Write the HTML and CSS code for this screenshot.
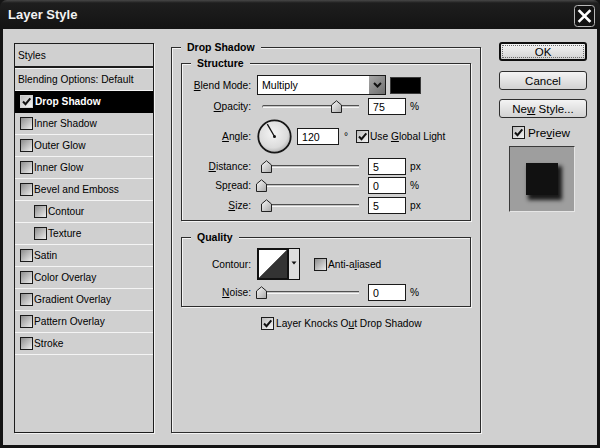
FILE: index.html
```html
<!DOCTYPE html>
<html>
<head>
<meta charset="utf-8">
<link rel="stylesheet" href="styles.css">
</head>
<body>
<div class="win">
  <div class="titlebar">
    <span class="title">Layer Style</span>
    <span class="close">
      <svg width="21" height="22" viewBox="0 0 21 22"><rect x="0.5" y="0.5" width="20" height="21" rx="3" fill="#121212" stroke="#b8b8b8"/><path d="M5.5 6 L15.5 16 M15.5 6 L5.5 16" stroke="#fff" stroke-width="2.6" stroke-linecap="square"/></svg>
    </span>
  </div>
  <div class="content">
    <div class="styles-panel">
      <div class="srow head">Styles</div>
      <div class="head-sep"></div>
      <div class="srow plain">Blending Options: Default</div>
      <div class="srow sel"><span class="cb on"><svg width="11" height="11" viewBox="0 0 11 11"><path d="M2 5.5 L4.5 8.2 L9.3 2.3" fill="none" stroke="#111" stroke-width="2"/></svg></span>Drop Shadow</div>
      <div class="srow"><span class="cb"></span>Inner Shadow</div>
      <div class="srow"><span class="cb"></span>Outer Glow</div>
      <div class="srow"><span class="cb"></span>Inner Glow</div>
      <div class="srow"><span class="cb"></span>Bevel and Emboss</div>
      <div class="srow indent"><span class="cb"></span>Contour</div>
      <div class="srow indent"><span class="cb"></span>Texture</div>
      <div class="srow"><span class="cb"></span>Satin</div>
      <div class="srow"><span class="cb"></span>Color Overlay</div>
      <div class="srow"><span class="cb"></span>Gradient Overlay</div>
      <div class="srow"><span class="cb"></span>Pattern Overlay</div>
      <div class="srow"><span class="cb"></span>Stroke</div>
    </div>

    <fieldset class="grp outer">
      <legend>Drop Shadow</legend>
      <fieldset class="grp inner structure">
        <legend>Structure</legend>
        <div class="row r-blend">
          <span class="lbl"><u>B</u>lend Mode:</span>
          <div class="select"><span class="sel-text">Multiply</span><span class="sel-btn"><svg width="9" height="6" viewBox="0 0 9 6"><path d="M1 1 L4.5 4.5 L8 1" fill="none" stroke="#111" stroke-width="2"/></svg></span></div>
          <span class="swatch"></span>
        </div>
        <div class="row r-op">
          <span class="lbl"><u>O</u>pacity:</span>
          <div class="slider"><span class="track"></span><span class="thumb" style="left:74px"><svg width="11" height="13" viewBox="0 0 11 13"><defs><linearGradient id="tg" x1="0" y1="0" x2="1" y2="1"><stop offset="0" stop-color="#fafafa"/><stop offset="1" stop-color="#a8a8a8"/></linearGradient></defs><path d="M0.5 5 L5.5 0.8 L10.5 5 L10.5 12.5 L0.5 12.5 Z" fill="url(#tg)" stroke="#222"/></svg></span></div>
          <span class="field">75</span><span class="unit">%</span>
        </div>
        <div class="row r-angle">
          <span class="lbl"><u>A</u>ngle:</span>
          <svg class="dial" width="35" height="35" viewBox="0 0 35 35"><defs><radialGradient id="dg" cx="0.45" cy="0.4" r="0.6"><stop offset="0" stop-color="#f4f4f4"/><stop offset="0.75" stop-color="#dcdcdc"/><stop offset="1" stop-color="#b4b4b4"/></radialGradient></defs><circle cx="17.5" cy="17.5" r="16.2" fill="url(#dg)" stroke="#161616" stroke-width="1.8"/><path d="M17.5 17.5 L10.3 5.2" stroke="#111" stroke-width="1.3"/><circle cx="17.5" cy="17.5" r="1.5" fill="#111"/></svg>
          <span class="field f-angle">120</span><span class="deg">°</span>
          <span class="cb on gl"><svg width="11" height="11" viewBox="0 0 11 11"><path d="M2 5.5 L4.5 8.2 L9.3 2.3" fill="none" stroke="#111" stroke-width="2"/></svg></span><span>Use <u>G</u>lobal Light</span>
        </div>
        <div class="row r-dist">
          <span class="lbl"><u>D</u>istance:</span>
          <div class="slider"><span class="track"></span><span class="thumb" style="left:4px"><svg width="11" height="13" viewBox="0 0 11 13"><path d="M0.5 5 L5.5 0.8 L10.5 5 L10.5 12.5 L0.5 12.5 Z" fill="url(#tg)" stroke="#222"/></svg></span></div>
          <span class="field">5</span><span class="unit">px</span>
        </div>
        <div class="row r-spread">
          <span class="lbl">Sp<u>r</u>ead:</span>
          <div class="slider"><span class="track"></span><span class="thumb" style="left:-1px"><svg width="11" height="13" viewBox="0 0 11 13"><path d="M0.5 5 L5.5 0.8 L10.5 5 L10.5 12.5 L0.5 12.5 Z" fill="url(#tg)" stroke="#222"/></svg></span></div>
          <span class="field">0</span><span class="unit">%</span>
        </div>
        <div class="row r-size">
          <span class="lbl"><u>S</u>ize:</span>
          <div class="slider"><span class="track"></span><span class="thumb" style="left:4px"><svg width="11" height="13" viewBox="0 0 11 13"><path d="M0.5 5 L5.5 0.8 L10.5 5 L10.5 12.5 L0.5 12.5 Z" fill="url(#tg)" stroke="#222"/></svg></span></div>
          <span class="field">5</span><span class="unit">px</span>
        </div>
      </fieldset>

      <fieldset class="grp inner quality">
        <legend>Quality</legend>
        <div class="row r-contour">
          <span class="lbl">Contour:</span>
          <svg class="contour" width="43" height="32" viewBox="0 0 43 32"><rect x="0" y="0" width="43" height="32" fill="#111"/><path d="M2 2 L30 2 L2 30 Z" fill="#fff"/><path d="M30 2 L30 30 L2 30 Z" fill="#333"/><rect x="32" y="1" width="10" height="30" fill="#dedede"/><path d="M34.5 13.5 L39.5 13.5 L37 16.5 Z" fill="#111"/></svg>
          <span class="cb aa"></span><span>Anti-a<u>l</u>iased</span>
        </div>
        <div class="row r-noise">
          <span class="lbl"><u>N</u>oise:</span>
          <div class="slider"><span class="track"></span><span class="thumb" style="left:-1px"><svg width="11" height="13" viewBox="0 0 11 13"><path d="M0.5 5 L5.5 0.8 L10.5 5 L10.5 12.5 L0.5 12.5 Z" fill="url(#tg)" stroke="#222"/></svg></span></div>
          <span class="field">0</span><span class="unit">%</span>
        </div>
      </fieldset>

      <div class="row knock">
        <span class="cb on"><svg width="11" height="11" viewBox="0 0 11 11"><path d="M2 5.5 L4.5 8.2 L9.3 2.3" fill="none" stroke="#111" stroke-width="2"/></svg></span><span>Layer Knocks O<u>u</u>t Drop Shadow</span>
      </div>
    </fieldset>

    <div class="side">
      <div class="btn default"><span class="focus">OK</span></div>
      <div class="btn cancel"><span>Cancel</span></div>
      <div class="btn newstyle"><span>Ne<u>w</u> Style...</span></div>
      <div class="prev-row"><span class="cb on"><svg width="11" height="11" viewBox="0 0 11 11"><path d="M2 5.5 L4.5 8.2 L9.3 2.3" fill="none" stroke="#111" stroke-width="2"/></svg></span><span>Pre<u>v</u>iew</span></div>
      <div class="preview"><div class="square"></div></div>
    </div>
  </div>
</div>
</body>
</html>
```
FILE: styles.css
```css
* { box-sizing: border-box; }
html, body { margin: 0; padding: 0; }
body {
  width: 600px;
  height: 448px;
  overflow: hidden;
  background: #141414;
  font-family: "Liberation Sans", Arial, sans-serif;
  font-size: 10.2px;
  color: #000;
}
u { text-decoration: underline; text-underline-offset: 1px; }

.win {
  width: 600px;
  height: 448px;
  padding: 0 3px 3px 3px;
  border-radius: 7px 7px 0 0;
  background: linear-gradient(#474747 0, #1e1e1e 3px, #131313 29px, #131313 100%);
  display: flex;
  flex-direction: column;
}
.titlebar {
  height: 29px;
  flex: none;
  display: flex;
  align-items: center;
  justify-content: space-between;
  padding: 0 2px 0 5px;
}
.title {
  color: #f2f2f2;
  font-weight: bold;
  font-size: 13px;
}
.close { display: flex; margin-top: 3px; }

.content {
  flex: 1;
  background: #d0d0d0;
  display: flex;
  align-items: flex-start;
  padding: 11px 0 0 11px;
}

/* left styles list */
.styles-panel {
  width: 140px;
  height: 390px;
  margin-top: 3px;
  border: 1px solid #1c1c1c;
  box-shadow: 1px 1px 0 #f2f2f2;
  flex: none;
}
.srow {
  height: 22px;
  border-bottom: 1px solid #f4f4f4;
  display: flex;
  align-items: center;
  padding-left: 5px;
  white-space: nowrap;
}
.srow.head { border-bottom: none; padding-left: 3px; }
.srow.plain { padding-left: 3px; }
.head-sep {
  height: 3px;
  border-top: 2px solid #1c1c1c;
  border-bottom: 1px solid #f4f4f4;
}
.srow.sel {
  background: #000;
  color: #fff;
  font-weight: bold;
  border-bottom-color: #000;
}
.srow.indent { padding-left: 19px; }

.cb {
  width: 13px;
  height: 13px;
  flex: none;
  border: 1px solid #1a1a1a;
  background: linear-gradient(135deg, #8e8e8e, #ececec);
  margin-right: 1px;
  display: inline-flex;
  align-items: center;
  justify-content: center;
}
.cb.on { background: linear-gradient(135deg, #bcbcbc, #f4f4f4); }
.srow.sel .cb { border-color: #d0d0d0; margin-right: 2px; }

/* group boxes */
.grp {
  margin: 0;
  min-width: 0;
  border: 1px solid #2c2c2c;
  box-shadow: 1px 1px 0 #f4f4f4, inset 1px 1px 0 #f4f4f4;
}
.grp legend {
  font-weight: bold;
  font-size: 10.5px;
  line-height: 14px;
  padding: 0 6px;
  background: #d0d0d0;
}
.outer {
  width: 310px;
  height: 393px;
  margin-left: 17px;
  padding: 0 9px;
  flex: none;
}
.inner { width: 290px; }
.inner legend { margin-left: 9px; }
.structure { margin-top: 2px; padding: 0 0 6px 0; }
.quality { margin-top: 9px; padding: 0 0 5px 0; }

.row { display: flex; align-items: center; white-space: nowrap; }
.lbl { width: 69px; margin-right: 6px; text-align: right; flex: none; }

.r-blend { height: 20px; margin-top: 5px; }
.r-op { height: 17px; margin-top: 3px; }
.r-angle { height: 35px; margin-top: 4px; }
.r-dist { height: 17px; margin-top: 4px; }
.r-spread { height: 17px; margin-top: 2px; }
.r-size { height: 17px; margin-top: 3px; }
.r-contour { height: 32px; margin-top: 4px; }
.r-noise { height: 17px; margin-top: 4px; }

.select {
  width: 129px;
  height: 20px;
  border: 1px solid #1a1a1a;
  background: #fff;
  display: flex;
  align-items: center;
  justify-content: space-between;
}
.sel-text { padding-left: 4px; font-size: 10.6px; }
.sel-btn {
  width: 16px;
  height: 18px;
  background: linear-gradient(135deg, #a8a8a8, #6e6e6e);
  display: flex;
  align-items: center;
  justify-content: center;
}
.swatch {
  width: 31px;
  height: 17px;
  margin-left: 4px;
  background: #000;
  border: 1px solid #3a3a3a;
}

.slider {
  position: relative;
  width: 102px;
  height: 17px;
  flex: none;
  display: flex;
  align-items: center;
}
.track {
  margin-left: 5px;
  flex: 1;
  height: 3px;
  border-top: 1px solid #505050;
  border-bottom: 1px solid #f6f6f6;
  border-left: 1px solid #707070;
  border-radius: 2px 0 0 2px;
  background: #c4c4c4;
}
.thumb {
  position: absolute;
  top: 2px;
  display: flex;
}
.field {
  width: 38px;
  height: 17px;
  margin-left: 9px;
  border: 1px solid #1a1a1a;
  background: #fff;
  padding-left: 4px;
  display: flex;
  align-items: center;
  font-size: 10.6px;
}
.unit { margin-left: 4px; }

.dial { flex: none; }
.field.f-angle { width: 42px; margin-left: 5px; }
.deg { margin-left: 5px; width: 12px; }
.cb.gl { margin-right: 1px; }

.contour { flex: none; }
.cb.aa { margin-left: 14px; margin-right: 1px; }

.knock { height: 14px; margin-top: 9px; margin-left: 80px; }
.knock .cb { margin-right: 2px; }

/* right column */
.side {
  width: 88px;
  margin-left: 18px;
  margin-top: 2px;
  flex: none;
  display: flex;
  flex-direction: column;
}
.btn {
  height: 19px;
  width: 88px;
  border: 1px solid #2e2e2e;
  border-radius: 3px;
  background: linear-gradient(#f4f4f4, #d2d2d2);
  display: flex;
  align-items: center;
  justify-content: center;
  font-size: 11.5px;
}
.btn.default { border: 2px solid #0e0e0e; padding: 1px; }
.focus {
  width: 100%;
  height: 100%;
  border: 1px dotted #6a6a6a;
  display: flex;
  align-items: center;
  justify-content: center;
}
.cancel { margin-top: 10px; }
.newstyle { margin-top: 9px; }
.prev-row {
  margin-top: 8px;
  padding-left: 13px;
  height: 13px;
  display: flex;
  align-items: center;
  font-size: 11.8px;
}
.prev-row .cb { margin-right: 3px; }
.preview {
  margin-top: 7px;
  margin-left: 10px;
  width: 66px;
  height: 66px;
  background: #9e9e9e;
  border-top: 1px solid #3a3a3a;
  border-left: 1px solid #3a3a3a;
  border-right: 1px solid #e6e6e6;
  border-bottom: 1px solid #e6e6e6;
  padding: 16px;
}
.square {
  width: 32px;
  height: 32px;
  background: #111;
  box-shadow: 3px 4px 4px 1px #1a1a1a;
}
```
